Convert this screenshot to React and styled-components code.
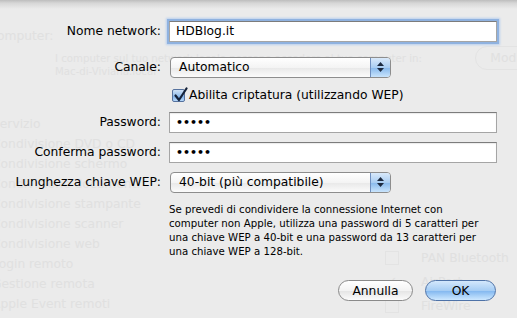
import React from 'react';
import styled, { createGlobalStyle } from 'styled-components';

const Global = createGlobalStyle`
  html, body { margin: 0; padding: 0; }
  body { background: #ebebeb; font-family: "DejaVu Sans", "Liberation Sans", sans-serif; }
`;

const Window = styled.div`
  position: relative;
  width: 517px;
  height: 318px;
  overflow: hidden;
  background: #ebebeb;
`;

/* faded preference pane behind the sheet */
const Backdrop = styled.div`
  color: #e0e0e0;
  font-size: 12.3px;
  padding-top: 28px;
`;
const GhostTitle = styled.div`
  margin-left: -50px;
  line-height: 16px;
`;
const GhostIntro = styled.div`
  display: flex;
  align-items: flex-start;
  margin-top: 2px;
  padding-left: 55px;
`;
const GhostNote = styled.div`
  font-size: 10.2px;
  line-height: 13px;
  padding-top: 6px;
  white-space: nowrap;
`;
const GhostButton = styled.div`
  margin-left: auto;
  margin-right: -52px;
  height: 22px;
  padding: 0 14px;
  border: 1px solid #e3e3e3;
  border-radius: 12px;
  line-height: 22px;
`;
const GhostColumns = styled.div`
  display: grid;
  grid-template-columns: 385px 1fr;
  margin-top: 36px;
`;
const GhostList = styled.div`
  margin-left: -8px;
  display: flex;
  flex-direction: column;
`;
const GhostItem = styled.div`
  height: 20px;
  line-height: 20px;
  white-space: nowrap;
`;
const GhostChecks = styled.div`
  padding-top: 132px;
  display: flex;
  flex-direction: column;
`;
const GhostCheck = styled.div`
  display: flex;
  align-items: center;
  gap: 22px;
  height: 24px;
  white-space: nowrap;
  &::before {
    content: '${p => (p.$on ? '✓' : '')}';
    width: 12px;
    height: 12px;
    border: 1px solid ${p => (p.$on ? 'transparent' : '#e3e3e3')};
    font-size: 13px;
    line-height: 12px;
    text-align: center;
  }
`;

/* the sheet lying over the window */
const Sheet = styled.div`
  position: absolute;
  inset: 0;
  background: linear-gradient(#bdbdbd 0px, #d6d6d6 3px, rgba(235, 235, 235, 0) 9px);
  display: flex;
  flex-direction: column;
  padding-top: 20px;
  color: #000;
`;
const Row = styled.div`
  display: grid;
  grid-template-columns: 161px 1fr;
  column-gap: 8px;
  align-items: center;
  height: ${p => p.$h || 22}px;
  margin-top: ${p => p.$mt || 0}px;
`;
const Label = styled.label`
  text-align: right;
  font-size: 12.3px;
  white-space: nowrap;
`;
const Field = styled.div`
  width: 328px;
  height: 21px;
  box-sizing: border-box;
  background: #fff;
  border: 1px solid #a5a5a5;
  border-top-color: #7c7c7c;
  box-shadow: ${p => (p.$focus ? '0 0 0 2px #8fb2e0, 0 0 2px 3px #b9cfee' : 'inset 0 1px 1px rgba(0,0,0,0.08)')};
  padding-left: 6px;
  font-size: 12.3px;
  line-height: 19px;
  white-space: nowrap;
`;
const Dots = styled.span`
  font-size: 11px;
  letter-spacing: 0;
  font-weight: bold;
`;
const Popup = styled.div`
  width: ${p => p.$w}px;
  height: 21px;
  box-sizing: border-box;
  border: 1px solid #8d8d8d;
  border-radius: 4px;
  overflow: hidden;
  background: linear-gradient(#ffffff, #f4f4f4 50%, #e8e8e8 51%, #fbfbfb);
  display: flex;
  align-items: center;
  padding-left: 8px;
  font-size: 12.3px;
  white-space: nowrap;
  margin-left: 1px;
`;
const Stepper = styled.div`
  margin-left: auto;
  width: 19px;
  align-self: stretch;
  border-left: 1px solid #6f8fbf;
  background: linear-gradient(#d9e9fa, #a9cdf2 50%, #86b8ec 51%, #c9e4fc);
  display: flex;
  flex-direction: column;
  align-items: center;
  justify-content: center;
  gap: 2px;
`;
const CheckLine = styled.div`
  display: flex;
  align-items: center;
  gap: 4px;
  font-size: 12.3px;
  padding-left: 3px;
  white-space: nowrap;
`;
const Box = styled.span`
  position: relative;
  width: 13px;
  height: 13px;
  box-sizing: border-box;
  border: 1px solid #56729e;
  border-radius: 2px;
  background: linear-gradient(#cfe2f7, #97c0ec 50%, #78ace6 51%, #b6d8fa);
`;
const Tick = styled.svg`
  position: absolute;
  left: 0;
  top: -3px;
`;
const Help = styled.p`
  margin: 10px 0 0 169px;
  font-size: 10.2px;
  line-height: 14px;
  white-space: nowrap;
`;
const Buttons = styled.div`
  display: flex;
  justify-content: flex-end;
  gap: 12px;
  margin-top: 21px;
  padding-right: 21px;
`;
const Button = styled.button`
  width: ${p => p.$w}px;
  height: 21px;
  border-radius: 11px;
  font-family: inherit;
  font-size: 12.3px;
  color: #000;
  padding: 0;
  border: 1px solid ${p => (p.$primary ? '#4f73a8' : '#8a8a8a')};
  background: ${p =>
    p.$primary
      ? 'linear-gradient(#d4e8fc, #a6cdf4 50%, #80b6ef 51%, #cde8ff)'
      : 'linear-gradient(#ffffff, #f3f3f3 50%, #e4e4e4 51%, #fbfbfb)'};
`;

const Arrows = () => (
  <>
    <svg width="7" height="4" viewBox="0 0 7 4"><path d="M0 4 L3.5 0 L7 4 Z" fill="#1c2a40" /></svg>
    <svg width="7" height="4" viewBox="0 0 7 4"><path d="M0 0 L3.5 4 L7 0 Z" fill="#1c2a40" /></svg>
  </>
);

export default function App() {
  return (
    <Window>
      <Global />
      <Backdrop>
        <GhostTitle>Nome computer:</GhostTitle>
        <GhostIntro>
          <GhostNote>
            I computer sul tuo network locale possono accedere al tuo computer in:
            <br />
            Mac-di-Viviana.local
          </GhostNote>
          <GhostButton>Modifica…</GhostButton>
        </GhostIntro>
        <GhostColumns>
          <GhostList>
            <GhostItem>Servizio</GhostItem>
            <GhostItem>Condivisione DVD o CD</GhostItem>
            <GhostItem>Condivisione schermo</GhostItem>
            <GhostItem>Condivisione documenti</GhostItem>
            <GhostItem>Condivisione stampante</GhostItem>
            <GhostItem>Condivisione scanner</GhostItem>
            <GhostItem>Condivisione web</GhostItem>
            <GhostItem>Login remoto</GhostItem>
            <GhostItem>Gestione remota</GhostItem>
            <GhostItem>Apple Event remoti</GhostItem>
          </GhostList>
          <GhostChecks>
            <GhostCheck>PAN Bluetooth</GhostCheck>
            <GhostCheck $on>AirPort</GhostCheck>
            <GhostCheck>FireWire</GhostCheck>
          </GhostChecks>
        </GhostColumns>
      </Backdrop>

      <Sheet>
        <Row>
          <Label>Nome network:</Label>
          <Field $focus>HDBlog.it</Field>
        </Row>
        <Row $mt={14}>
          <Label>Canale:</Label>
          <Popup $w={221}>
            Automatico
            <Stepper><Arrows /></Stepper>
          </Popup>
        </Row>
        <Row $mt={9} $h={16}>
          <span />
          <CheckLine>
            <Box>
              <Tick width="16" height="16" viewBox="0 0 16 16">
                <path d="M2.5 8.5 L6 13 L13.5 1.5" fill="none" stroke="#14223a" strokeWidth="2.2" strokeLinecap="round" strokeLinejoin="round" />
              </Tick>
            </Box>
            Abilita criptatura (utilizzando WEP)
          </CheckLine>
        </Row>
        <Row $mt={8}>
          <Label>Password:</Label>
          <Field><Dots>•••••</Dots></Field>
        </Row>
        <Row $mt={8}>
          <Label>Conferma password:</Label>
          <Field><Dots>•••••</Dots></Field>
        </Row>
        <Row $mt={8}>
          <Label>Lunghezza chiave WEP:</Label>
          <Popup $w={221}>
            40-bit (più compatibile)
            <Stepper><Arrows /></Stepper>
          </Popup>
        </Row>
        <Help>
          Se prevedi di condividere la connessione Internet con
          <br />
          computer non Apple, utilizza una password di 5 caratteri per
          <br />
          una chiave WEP a 40-bit e una password da 13 caratteri per
          <br />
          una chiave WEP a 128-bit.
        </Help>
        <Buttons>
          <Button $w={75}>Annulla</Button>
          <Button $w={71} $primary>OK</Button>
        </Buttons>
      </Sheet>
    </Window>
  );
}
